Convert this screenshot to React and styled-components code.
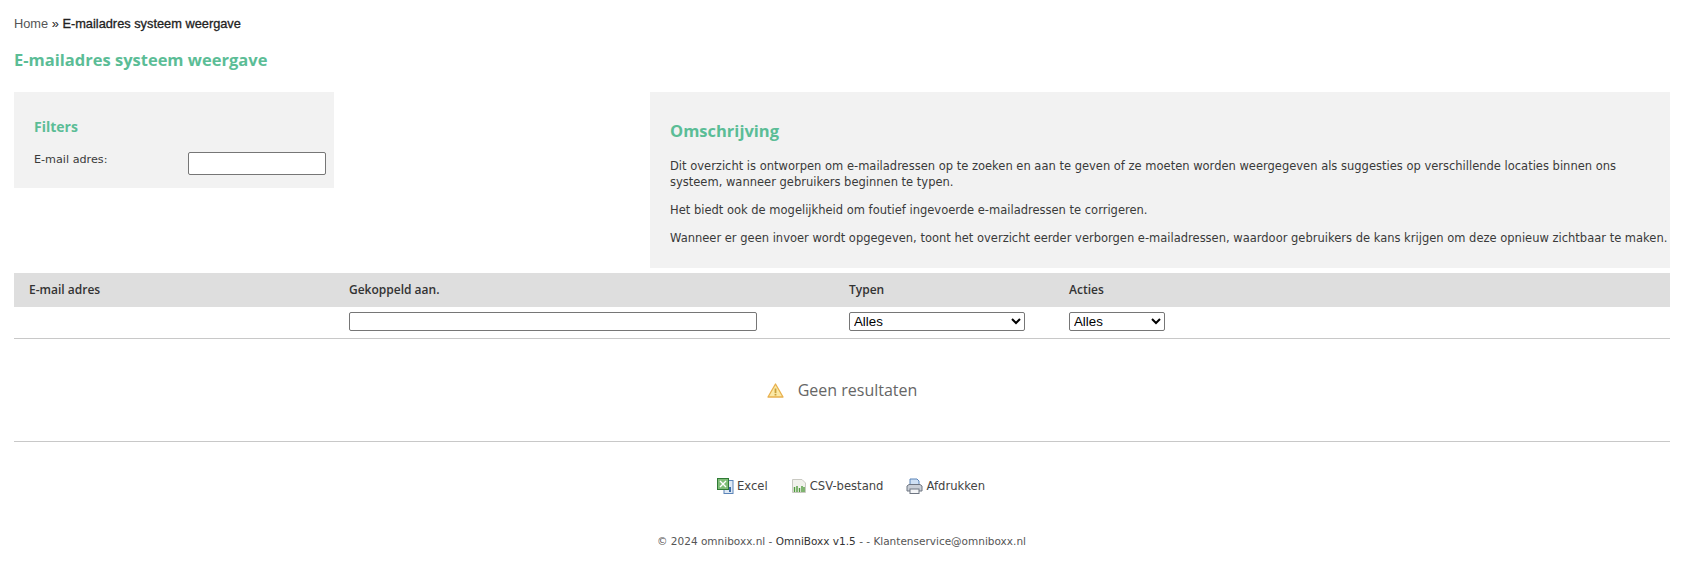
import styled, { createGlobalStyle } from 'styled-components';

const GlobalStyle = createGlobalStyle`
    html, body {
        margin: 0;
        padding: 0;
        background: #fff;
    }
`;

const App = () => {
    return (
        <Page>
            <GlobalStyle />
            <Breadcrumb>
                <span>Home</span> » <strong>E-mailadres systeem weergave</strong>
            </Breadcrumb>
            <PageTitle>E-mailadres systeem weergave</PageTitle>

            <TopRow>
                <FilterBox>
                    <BoxTitle>Filters</BoxTitle>
                    <FilterRow>
                        <FilterLabel>E-mail adres:</FilterLabel>
                        <TextInput $width="138px" />
                    </FilterRow>
                </FilterBox>
                <DescriptionBox>
                    <DescriptionTitle>Omschrijving</DescriptionTitle>
                    <Paragraph>
                        Dit overzicht is ontworpen om e-mailadressen op te zoeken en aan te geven of ze moeten worden weergegeven als suggesties op verschillende locaties binnen ons systeem, wanneer gebruikers beginnen te typen.
                    </Paragraph>
                    <Paragraph>Het biedt ook de mogelijkheid om foutief ingevoerde e-mailadressen te corrigeren.</Paragraph>
                    <Paragraph>
                        Wanneer er geen invoer wordt opgegeven, toont het overzicht eerder verborgen e-mailadressen, waardoor gebruikers de kans krijgen om deze opnieuw zichtbaar te maken.
                    </Paragraph>
                </DescriptionBox>
            </TopRow>

            <TableHead>
                <HeadCell>E-mail adres</HeadCell>
                <HeadCell>Gekoppeld aan.</HeadCell>
                <HeadCell>Typen</HeadCell>
                <HeadCell>Acties</HeadCell>
            </TableHead>
            <TableFilters>
                <div />
                <div><TextInput $width="408px" $height="19px" /></div>
                <div>
                    <SelectInput $width="176px"><option>Alles</option></SelectInput>
                </div>
                <div>
                    <SelectInput $width="96px"><option>Alles</option></SelectInput>
                </div>
            </TableFilters>

            <EmptyRow>
                <svg width="17" height="15" viewBox="0 0 17 15">
                    <path d="M8.5 1 L16 14 L1 14 Z" fill="#fbe9a6" stroke="#e8b04e" strokeWidth="1.3" strokeLinejoin="round" />
                    <rect x="7.6" y="5.5" width="1.8" height="4.5" fill="#c9a03c" />
                    <rect x="7.6" y="10.8" width="1.8" height="1.7" fill="#c9a03c" />
                </svg>
                <EmptyText>Geen resultaten</EmptyText>
            </EmptyRow>

            <Exports>
                <ExportLink>
                    <svg width="17" height="16" viewBox="0 0 17 16">
                        <rect x="7" y="2.5" width="9" height="13" fill="#dfe9f5" stroke="#5b84b8" />
                        <rect x="0.5" y="0.5" width="11" height="11" fill="#7fbd78" stroke="#2f7a35" />
                        <path d="M3 3 L9 9 M9 3 L3 9" stroke="#fff" strokeWidth="1.4" />
                        <rect x="12" y="9" width="2" height="5" fill="#3e6da8" />
                    </svg>
                    Excel
                </ExportLink>
                <ExportLink>
                    <svg width="16" height="16" viewBox="0 0 16 16">
                        <path d="M1.5 1.5 H11 L14.5 5 V14.5 H1.5 Z" fill="#f1f1ec" stroke="#c9c9c2" />
                        <path d="M3.5 9 V14 M6 8 V14 M8.5 10 V14 M11 8 V14 M13 9 V14" stroke="#4f9a3c" strokeWidth="1.4" />
                    </svg>
                    CSV-bestand
                </ExportLink>
                <ExportLink>
                    <svg width="17" height="16" viewBox="0 0 17 16">
                        <path d="M4 8 V1 H11 L13 3 V8 Z" fill="#cfe0f4" stroke="#5b84b8" />
                        <path d="M1 8 L3 6.5 H14 L16 8 V13 H1 Z" fill="#c9ced6" stroke="#6f7682" />
                        <rect x="4" y="11" width="9" height="4.5" fill="#f4f5f7" stroke="#6f7682" />
                    </svg>
                    Afdrukken
                </ExportLink>
            </Exports>

            <Footer>© 2024 omniboxx.nl - <FooterDark>OmniBoxx v1.5</FooterDark> - - Klantenservice@omniboxx.nl</Footer>
        </Page>
    );
};

const Page = styled.div`
    box-sizing: border-box;
    width: 1685px;
    height: 570px;
    padding: 16px 15px 0 14px;
    overflow: hidden;
    color: #333;
    font-family: "DejaVu Sans", Verdana, sans-serif;
`;

const Breadcrumb = styled.div`
    font-family: "Liberation Sans", Arial, sans-serif;
    font-size: 12.8px;
    line-height: 15px;
    color: #222;

    span {
        color: #555;
    }

    strong {
        font-weight: 400;
        -webkit-text-stroke: 0.3px #222;
    }
`;

const PageTitle = styled.h1`
    margin: 18px 0 0;
    font-family: "Open Sans", sans-serif;
    font-size: 16.5px;
    line-height: 22px;
    font-weight: 700;
    color: #5bbd96;
`;

const TopRow = styled.div`
    display: flex;
    justify-content: space-between;
    align-items: flex-start;
    margin-top: 21px;
`;

const FilterBox = styled.div`
    box-sizing: border-box;
    width: 320px;
    height: 96px;
    padding: 25px 8px 0 20px;
    background: #f2f2f2;
`;

const BoxTitle = styled.h3`
    margin: 0;
    font-family: "Open Sans", sans-serif;
    font-size: 14px;
    line-height: 19px;
    font-weight: 700;
    color: #5bbd96;
`;

const FilterRow = styled.div`
    display: flex;
    justify-content: space-between;
    align-items: flex-start;
    margin-top: 16px;
`;

const FilterLabel = styled.label`
    font-size: 11.2px;
    line-height: 16px;
    color: #3a3a3a;
`;

const TextInput = styled.input`
    box-sizing: border-box;
    display: block;
    width: ${(props) => props.$width};
    height: ${(props) => props.$height || '23px'};
    padding: 0 4px;
    background: #fff;
    border: 1px solid #767676;
    border-radius: 2px;
`;

const DescriptionBox = styled.div`
    box-sizing: border-box;
    width: 1020px;
    height: 176px;
    padding: 28px 0 0 20px;
    background: #f2f2f2;
`;

const DescriptionTitle = styled.h2`
    margin: 0 0 16px;
    font-family: "Open Sans", sans-serif;
    font-size: 16.5px;
    line-height: 22px;
    font-weight: 700;
    color: #5bbd96;
`;

const Paragraph = styled.p`
    margin: 0 0 12px;
    font-size: 11.5px;
    line-height: 16px;
    color: #3a3a3a;
`;

const columns = `grid-template-columns: 320px 500px 220px 1fr;`;

const TableHead = styled.div`
    display: grid;
    ${columns}
    align-items: center;
    height: 34px;
    margin-top: 5px;
    background: #dedede;
`;

const HeadCell = styled.div`
    padding: 0 0 2px 15px;
    font-family: "Open Sans", sans-serif;
    font-size: 12px;
    font-weight: 600;
    color: #333;
`;

const TableFilters = styled.div`
    display: grid;
    ${columns}
    box-sizing: border-box;
    height: 32px;
    padding-top: 5px;
    border-bottom: 1px solid #c8c8c8;

    > div {
        padding-left: 15px;
    }
`;

const SelectInput = styled.select`
    box-sizing: border-box;
    display: block;
    width: ${(props) => props.$width};
    height: 19px;
    padding: 0;
    font-family: "Liberation Sans", Arial, sans-serif;
    font-size: 13.3px;
    color: #000;
    background: #fff;
    border: 1px solid #767676;
    border-radius: 2px;
`;

const EmptyRow = styled.div`
    box-sizing: border-box;
    display: flex;
    justify-content: center;
    align-items: center;
    gap: 14px;
    height: 103px;
    border-bottom: 1px solid #c8c8c8;
`;

const EmptyText = styled.span`
    font-family: "Open Sans", sans-serif;
    font-size: 16px;
    color: #666;
`;

const Exports = styled.div`
    display: flex;
    justify-content: center;
    gap: 23px;
    margin-top: 36px;
    padding-left: 18px;
`;

const ExportLink = styled.a`
    display: flex;
    align-items: center;
    gap: 3px;
    font-size: 11.6px;
    line-height: 16px;
    color: #444;
`;

const Footer = styled.div`
    margin-top: 40px;
    padding-right: 1px;
    text-align: center;
    font-size: 10.5px;
    line-height: 14px;
    color: #555;
`;

const FooterDark = styled.span`
    color: #333;
`;

export default App;
